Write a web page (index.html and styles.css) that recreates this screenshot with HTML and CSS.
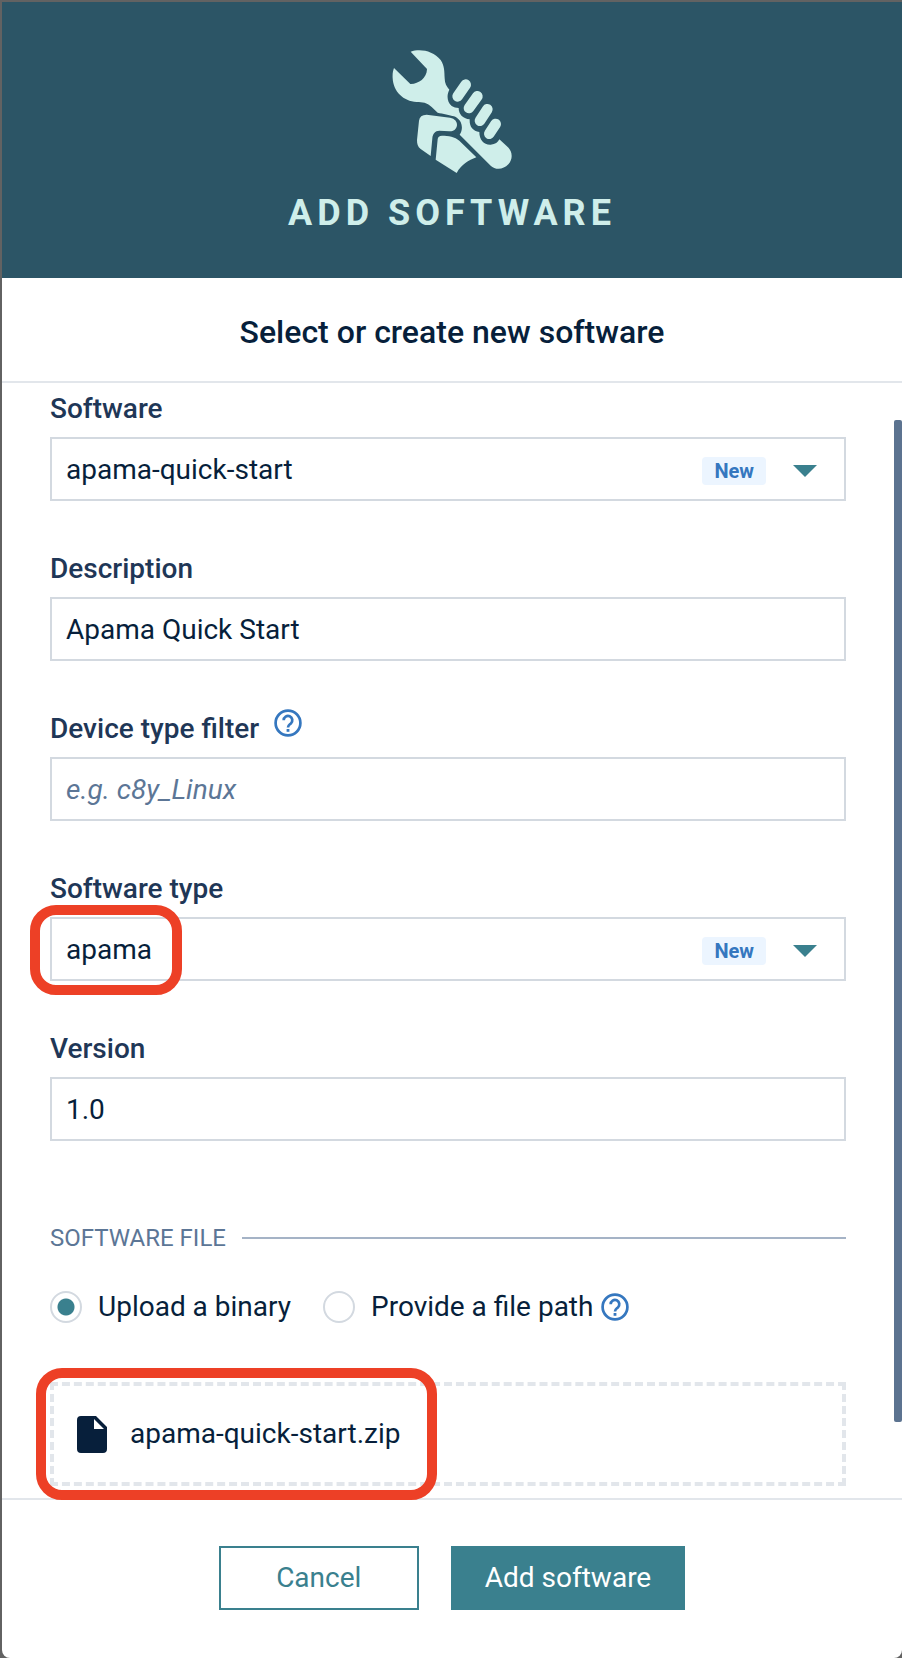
FILE: index.html
```html
<!DOCTYPE html>
<html lang="en">
<head>
<meta charset="utf-8">
<meta name="viewport" content="width=device-width, initial-scale=1">
<title>Add software</title>
<link rel="stylesheet" href="styles.css">
</head>
<body>
<main class="modal" role="dialog" aria-labelledby="modal-title">
  <header class="modal-header">
    <svg class="modal-icon" viewBox="66 60 360 369" aria-hidden="true">
      <path d="M122 65C150 55 190 62 212 90C224 108 223 125 224 145C224 160 230 170 238 179C230 195 230 215 245 228C251 232 258 234 266 234C266 252 278 266 299 268C298 290 308 303 328 306C328 330 342 345 362 344C376 343 384 337 388 328L414 352C428 366 429 388 415 403C400 420 375 420 362 407L269 314C282 295 276 268 252 259C240 256 218 251 203 248L185 231C170 217 158 217 140 216C100 214 70 185 68 145C67 130 69 122 72 114L121 162C145 163 170 145 171 118Q170 115 166 112Z"/>
      <path d="M170 254L240 263C255 266 262 275 261 286C259 300 248 305 238 304L208 302C195 302 188 312 187 325L182 378L152 357C143 350 141 342 141 330L147 272Q149 254 170 254Z"/>
      <path d="M216 317C235 317 255 320 268 332L319 382C295 392 275 402 260 429L197 389L203 328Q204 317 216 317Z"/>
      <path class="fingers" d="M287 164L263 199M322 199L297 234M352 238L330 272M377 282L358 311"/>
    </svg>
    <h1 class="modal-title" id="modal-title">ADD SOFTWARE</h1>
  </header>
  <h2 class="subtitle">Select or create new software</h2>
  <form class="form" id="software-form">
    <div class="field">
      <label class="label" for="software">Software</label>
      <div class="combo">
        <input class="combo-input" id="software" type="text" value="apama-quick-start">
        <span class="badge">New</span>
        <button class="caret" type="button" aria-label="Show software"><svg width="24" height="12" viewBox="0 0 24 12" aria-hidden="true"><path d="M0 0H24L12 12Z"/></svg></button>
      </div>
    </div>
    <div class="field">
      <label class="label" for="description">Description</label>
      <input class="input" id="description" type="text" value="Apama Quick Start">
    </div>
    <div class="field">
      <div class="label-row">
        <label class="label" for="device-type">Device type filter</label>
        <button class="help" type="button" aria-label="Help on device type filter"><svg viewBox="0 0 28 28" aria-hidden="true"><circle cx="14" cy="14" r="12.4"/><path d="M9.7 11.2a4.3 4.3 0 1 1 7.2 3.2c-1.5 1.3-2.9 2-2.9 4.1"/><path class="dot" d="M12.6 20h2.8v2.8h-2.8z"/></svg></button>
      </div>
      <input class="input" id="device-type" type="text" placeholder="e.g. c8y_Linux">
    </div>
    <div class="field">
      <label class="label" for="software-type">Software type</label>
      <div class="combo">
        <input class="combo-input" id="software-type" type="text" value="apama">
        <span class="badge">New</span>
        <button class="caret" type="button" aria-label="Show software types"><svg width="24" height="12" viewBox="0 0 24 12" aria-hidden="true"><path d="M0 0H24L12 12Z"/></svg></button>
        <span class="highlight highlight-type"></span>
      </div>
    </div>
    <div class="field">
      <label class="label" for="version">Version</label>
      <input class="input" id="version" type="text" value="1.0">
    </div>
    <section class="file-section" aria-labelledby="file-heading">
      <h3 class="section-heading" id="file-heading">SOFTWARE FILE</h3>
      <div class="options">
        <label class="option"><input class="radio" type="radio" name="source" checked><span>Upload a binary</span></label>
        <div class="option-help">
          <label class="option"><input class="radio" type="radio" name="source"><span>Provide a file path</span></label>
          <button class="help" type="button" aria-label="Help on file path"><svg viewBox="0 0 28 28" aria-hidden="true"><circle cx="14" cy="14" r="12.4"/><path d="M9.7 11.2a4.3 4.3 0 1 1 7.2 3.2c-1.5 1.3-2.9 2-2.9 4.1"/><path class="dot" d="M12.6 20h2.8v2.8h-2.8z"/></svg></button>
        </div>
      </div>
      <div class="dropzone">
        <svg class="file-icon" viewBox="0 0 30 37" aria-hidden="true"><path fill-rule="evenodd" d="M4 0H19L30 11V33Q30 37 26 37H4Q0 37 0 33V4Q0 0 4 0ZM17 3V13H27Z"/></svg>
        <span>apama-quick-start.zip</span>
        <span class="highlight highlight-file"></span>
      </div>
    </section>
    <span class="scroll-thumb"></span>
  </form>
  <footer class="modal-footer">
    <button class="btn btn-outline" type="button">Cancel</button>
    <button class="btn btn-primary" type="submit" form="software-form">Add software</button>
  </footer>
</main>
</body>
</html>
```
FILE: styles.css
```css
* { box-sizing: border-box; }

body {
  margin: 0;
  padding: 2px 0 0 2px;
  min-height: 100vh;
  display: flex;
  background: #626262;
  color: #071f3b;
  font: 400 28px/40px Roboto, "Liberation Sans", sans-serif;
}

h1, h2, h3 { margin: 0; font-weight: 500; }
button, input { font: inherit; color: inherit; }
button { cursor: pointer; }

.modal {
  flex: 1;
  min-width: 0;
  display: flex;
  flex-direction: column;
  background: #fff;
  border-radius: 0 0 8px 8px;
}

.modal-header {
  display: flex;
  flex-direction: column;
  align-items: center;
  gap: 20px;
  padding: 48px 16px 45px;
  background: #2c5566;
  color: #cfeeea;
}
.modal-icon { width: 120px; height: 123px; fill: currentColor; }
.fingers { fill: none; stroke: currentColor; stroke-width: 32; stroke-linecap: round; }
.modal-title { font-size: 36px; font-weight: 700; line-height: 40px; letter-spacing: 5px; }

.subtitle {
  padding: 34px 16px 29px;
  border-bottom: 2px solid #e2e6eb;
  text-align: center;
  font-size: 32px;
  line-height: 40px;
}

.form {
  position: relative;
  flex: 1;
  display: flex;
  flex-direction: column;
  gap: 48px;
  padding: 6px 56px 8px 48px;
}
.field { display: flex; flex-direction: column; gap: 8px; }
.label { color: #1f3757; font-weight: 500; }
.label-row { display: flex; gap: 15px; }

.input, .combo {
  width: 100%;
  height: 64px;
  border: 2px solid #d3d9e0;
  border-radius: 0;
  background: #fff;
}
.input { padding: 0 14px; }
.input::placeholder { color: #5c7696; font-style: italic; opacity: 1; }
.combo { position: relative; display: flex; align-items: center; }
.combo-input {
  flex: 1;
  min-width: 0;
  height: 100%;
  padding: 0 14px;
  border: 0;
  background: none;
}
.badge {
  margin-top: 4px;
  padding: 0 12px;
  border-radius: 4px;
  background: #ecf5ff;
  color: #3577bf;
  font-size: 20px;
  font-weight: 700;
  line-height: 28px;
}
.caret {
  width: 78px;
  height: 60px;
  padding: 4px 0 0;
  border: 0;
  background: none;
  display: flex;
  align-items: center;
  justify-content: center;
  fill: #3a808e;
}

.help {
  width: 28px;
  height: 28px;
  padding: 0;
  border: 0;
  background: none;
}
.help svg {
  display: block;
  fill: none;
  stroke: #3577bf;
  stroke-width: 2.7;
}
.help .dot { fill: #3577bf; stroke: none; }

.file-section { padding-top: 32px; }
.section-heading {
  display: flex;
  align-items: center;
  gap: 16px;
  color: #5c7696;
  font-size: 24px;
  font-weight: 400;
  line-height: 34px;
}
.section-heading::after { content: ""; flex: 1; height: 2px; background: #a5b3c6; }

.options { display: flex; flex-wrap: wrap; gap: 32px; padding: 32px 0 55px; }
.option, .option-help { display: flex; align-items: center; }
.option { gap: 16px; }
.option-help { gap: 8px; }
.radio {
  appearance: none;
  width: 32px;
  height: 32px;
  margin: 0;
  border: 2px solid #d3d9e0;
  border-radius: 50%;
}
.radio:checked { background: radial-gradient(circle, #3a808e 8px, #fff 9px); }

.dropzone {
  position: relative;
  display: flex;
  align-items: center;
  gap: 23px;
  height: 104px;
  padding: 0 23px;
  border: 4px dashed #e2e6eb;
}
.file-icon { width: 30px; height: 37px; fill: #071f3b; }

/* Tutorial call-outs drawn over the form */
.highlight {
  position: absolute;
  border: 10px solid #ed4026;
  border-radius: 26px;
  pointer-events: none;
}
.highlight-type { left: -22px; top: -14px; width: 152px; height: 90px; }
.highlight-file { left: -18px; top: -18px; width: 401px; height: 132px; z-index: 1; }

.scroll-thumb {
  position: absolute;
  top: 37px;
  right: 0;
  bottom: 76px;
  width: 8px;
  border-radius: 2px;
  background: #5c7390;
}

.modal-footer {
  display: flex;
  justify-content: center;
  gap: 32px;
  padding: 46px 16px 48px;
  border-top: 2px solid #e2e6eb;
}
.btn {
  min-width: 200px;
  height: 64px;
  padding: 0 32px;
  border: 2px solid #3a808e;
  border-radius: 0;
}
.btn-outline { background: #fff; color: #3a808e; }
.btn-primary { background: #3a808e; color: #fff; }
```
